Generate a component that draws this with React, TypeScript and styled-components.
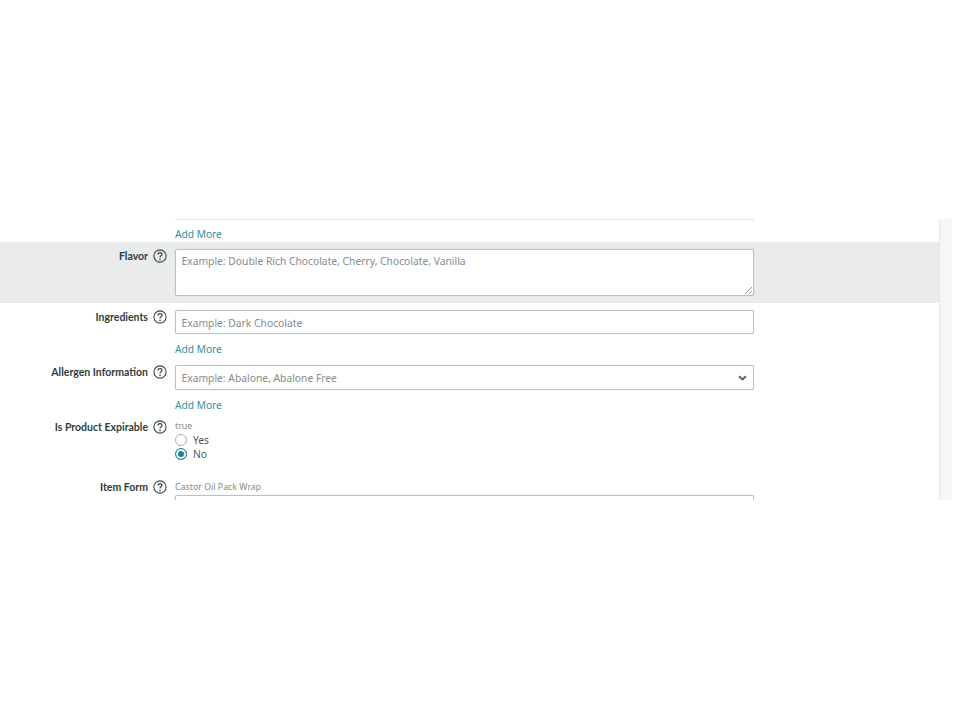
import React from 'react'
import styled, { createGlobalStyle } from 'styled-components'

const GlobalStyle = createGlobalStyle`
  html, body {
    margin: 0;
    padding: 0;
    background: #fff;
    font-family: "Noto Sans", "Open Sans", sans-serif;
  }
`

function HelpIcon() {
  return (
    <HelpSvg viewBox="0 0 14 14" aria-hidden="true">
      <circle cx="7" cy="7" r="6.1" fill="none" stroke="#3c4849" strokeWidth="1.1" />
      <path d="M5 5.5c0-1.1.9-1.8 2-1.8s2 .7 2 1.7c0 1.4-2 1.5-2 3" fill="none" stroke="#3c4849" strokeWidth="1.2" />
      <circle cx="7" cy="10.4" r=".8" fill="#3c4849" />
    </HelpSvg>
  )
}

function Chevron() {
  return (
    <ChevronSvg viewBox="0 0 10 7" aria-hidden="true">
      <path d="M1 1.5l4 3.6 4-3.6" fill="none" stroke="#555e5f" strokeWidth="2.2" />
    </ChevronSvg>
  )
}

function Label({ text }: { text: string }) {
  return (
    <LabelCell>
      <LabelText>{text}</LabelText>
      <HelpIcon />
    </LabelCell>
  )
}

export default function App() {
  return (
    <>
      <GlobalStyle />
      <Frame>
        <Content>
          <TopField>
            <Divider />
            <AddMore $top={7}>Add More</AddMore>
          </TopField>

          <HighlightRow>
            <Label text="Flavor" />
            <FieldColumn>
              <TextArea>
                Example: Double Rich Chocolate, Cherry, Chocolate, Vanilla
                <ResizeGrip viewBox="0 0 8 8" aria-hidden="true">
                  <path d="M1 8L8 1M5 8l3-3" stroke="#8d9496" strokeWidth="1" fill="none" />
                </ResizeGrip>
              </TextArea>
            </FieldColumn>
          </HighlightRow>

          <Row $top={7}>
            <Label text="Ingredients" />
            <FieldColumn>
              <InputBox>Example: Dark Chocolate</InputBox>
              <AddMore $top={8}>Add More</AddMore>
            </FieldColumn>
          </Row>

          <Row $top={9}>
            <Label text="Allergen Information" />
            <FieldColumn>
              <InputBox $height={25}>
                Example: Abalone, Abalone Free
                <Chevron />
              </InputBox>
              <AddMore $top={8}>Add More</AddMore>
            </FieldColumn>
          </Row>

          <Row $top={8}>
            <Label text="Is Product Expirable" />
            <FieldColumn>
              <SmallNote>true</SmallNote>
              <RadioRow>
                <RadioDot />
                Yes
              </RadioRow>
              <RadioRow>
                <RadioDot $checked />
                No
              </RadioRow>
            </FieldColumn>
          </Row>

          <Row $top={19}>
            <Label text="Item Form" />
            <FieldColumn>
              <SmallNote $top={1}>Castor Oil Pack Wrap</SmallNote>
              <InputBox $top={1} />
            </FieldColumn>
          </Row>
        </Content>
        <ScrollTrack />
      </Frame>
    </>
  )
}

const Frame = styled.div`
  display: flex;
  width: 952px;
  height: 281px;
  margin-top: 219px;
  overflow: hidden;
`
const Content = styled.div`
  flex: 1;
  min-width: 0;
`
const ScrollTrack = styled.div`
  width: 13px;
  background: #f5f7f7;
  border-left: 1px solid #e6e9e9;
  box-sizing: border-box;
`
const TopField = styled.div`
  padding-left: 175px;
  width: 579px;
  height: 23px;
`
const Divider = styled.div`
  height: 1px;
  background: #e3e5e5;
`
const Row = styled.div<{ $top: number }>`
  display: flex;
  margin-top: ${(p) => p.$top}px;
`
const HighlightRow = styled.div`
  display: flex;
  height: 61px;
  padding-top: 7px;
  box-sizing: border-box;
  background: #e9ebec;
`
const LabelCell = styled.div`
  display: flex;
  justify-content: flex-end;
  align-items: center;
  gap: 5px;
  width: 167px;
  height: 14px;
  margin-right: 8px;
  flex-shrink: 0;
`
const LabelText = styled.span`
  font-family: Lato, "Noto Sans", sans-serif;
  font-size: 10.5px;
  font-weight: 700;
  line-height: 14px;
  color: #2f3d40;
  white-space: nowrap;
`
const HelpSvg = styled.svg`
  width: 14px;
  height: 14px;
  flex-shrink: 0;
`
const FieldColumn = styled.div`
  width: 579px;
  flex-shrink: 0;
`
const AddMore = styled.div<{ $top: number }>`
  margin-top: ${(p) => p.$top}px;
  font-size: 10.2px;
  line-height: 14px;
  color: #33919d;
`
const InputBox = styled.div<{ $top?: number; $height?: number }>`
  position: relative;
  display: flex;
  align-items: center;
  justify-content: space-between;
  height: ${(p) => p.$height ?? 24}px;
  margin-top: ${(p) => p.$top ?? 0}px;
  padding: 1px 6px 0 5.5px;
  box-sizing: border-box;
  background: #fff;
  border: 1px solid #bcc0c0;
  border-radius: 2px;
  box-shadow: 0 0 1px #b9bdbd;
  font-size: 10.3px;
  color: #858c8d;
`
const TextArea = styled.div`
  position: relative;
  height: 47px;
  padding: 4px 5.5px;
  box-sizing: border-box;
  background: #fff;
  border: 1px solid #bcc0c0;
  border-radius: 2px;
  box-shadow: 0 0 1px #b9bdbd;
  font-size: 10.3px;
  line-height: 14px;
  color: #858c8d;
`
const ResizeGrip = styled.svg`
  position: absolute;
  right: 1px;
  bottom: 1px;
  width: 8px;
  height: 8px;
`
const ChevronSvg = styled.svg`
  width: 9px;
  height: 6px;
`
const SmallNote = styled.div<{ $top?: number }>`
  margin-top: ${(p) => p.$top ?? 0}px;
  font-size: 8.8px;
  line-height: 13px;
  color: #858c8d;
`
const RadioRow = styled.div`
  display: flex;
  align-items: center;
  gap: 6px;
  height: 14px;
  font-size: 10.3px;
  color: #4c5556;
`
const RadioDot = styled.span<{ $checked?: boolean }>`
  width: 12px;
  height: 12px;
  box-sizing: border-box;
  border-radius: 50%;
  background: ${(p) => (p.$checked ? '#1f8094' : '#fff')};
  border: 1px solid ${(p) => (p.$checked ? '#2b8c98' : '#a9afaf')};
  box-shadow: ${(p) => (p.$checked ? 'inset 0 0 0 2px #fff' : 'none')};
`
